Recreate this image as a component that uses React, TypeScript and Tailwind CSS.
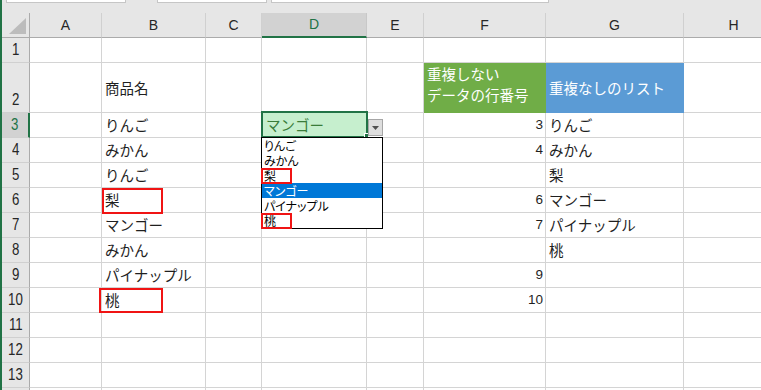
const jp = "font-['Noto_Sans_CJK_JP',sans-serif]";
const lat = "font-['Liberation_Sans',sans-serif]";

type Cell = { t?: string; num?: boolean };

const letters = ["A", "B", "C", "D", "E", "F", "G", "H"];

// row number -> column letter -> cell
const data: Record<number, Record<string, Cell>> = {
  3: { B: { t: "りんご" }, F: { t: "3", num: true }, G: { t: "りんご" } },
  4: { B: { t: "みかん" }, F: { t: "4", num: true }, G: { t: "みかん" } },
  5: { B: { t: "りんご" }, G: { t: "梨" } },
  6: { B: { t: "梨" }, F: { t: "6", num: true }, G: { t: "マンゴー" } },
  7: { B: { t: "マンゴー" }, F: { t: "7", num: true }, G: { t: "パイナップル" } },
  8: { B: { t: "みかん" }, G: { t: "桃" } },
  9: { B: { t: "パイナップル" }, F: { t: "9", num: true } },
  10: { B: { t: "桃" }, F: { t: "10", num: true } },
};

const listItems = ["りんご", "みかん", "梨", "マンゴー", "パイナップル", "桃"];

const TopStrip = () => (
  <div className="flex h-[13px] bg-[#e6e6e6]">
    <div className="ml-[4px] w-[120px] h-[3px] bg-white border border-t-0 border-[#c6c6c6]" />
    <div className="ml-[31px] w-[110px] h-[3px] bg-white border border-t-0 border-[#c6c6c6]" />
    <div className="ml-[4px] w-[278px] h-[3px] bg-white border border-t-0 border-[#c6c6c6]" />
  </div>
);

const RowHeader = ({ n }: { n: number }) => {
  const sel = n === 3;
  return (
    <div
      className={`flex items-end justify-center pb-[4px] border-b border-[#d0d0d0] ${
        sel ? "bg-[#d2d2d2] border-r-2 border-r-[#217346] text-[#217346]" : "bg-[#e6e6e6] border-r border-r-[#ababab] text-[#262626]"
      }`}
    >
      {/* row 14 is only partly on screen */}
      {n < 14 && <span className={`${lat} inline-block text-[17px] leading-none scale-x-[0.78]`}>{n}</span>}
    </div>
  );
};

const DataCell = ({ row, col }: { row: number; col: string }) => {
  if (row === 2 && col === "B")
    return (
      <div className={`${jp} flex items-center pl-[3px] text-[14.5px] text-[#1f1f1f] border-r border-b border-[#d4d4d4]`}>
        商品名
      </div>
    );
  if (row === 2 && col === "F")
    return (
      <div className={`${jp} flex flex-col justify-center pl-[3px] pb-[7px] text-[14.5px] leading-[21px] text-white bg-[#70ad47] border-r border-b border-[#70ad47]`}>
        <span>重複しない</span>
        <span>データの行番号</span>
      </div>
    );
  if (row === 2 && col === "G")
    return (
      <div className={`${jp} flex items-center pl-[3px] text-[14.5px] text-white bg-[#5b9bd5] border-r border-b border-[#5b9bd5]`}>
        重複なしのリスト
      </div>
    );
  if (row === 3 && col === "D")
    return (
      <div className={`${jp} flex items-center pl-[4px] text-[14.5px] text-[#3a7d3a] bg-[#c6efce] border-r border-b border-[#d4d4d4]`}>
        マンゴー
      </div>
    );
  const c = data[row]?.[col];
  if (c?.num)
    return (
      <div className={`${lat} flex items-center justify-end pr-[2px] text-[13.5px] text-[#1f1f1f] border-r border-b border-[#d4d4d4]`}>
        {c.t}
      </div>
    );
  return (
    <div className={`${jp} flex items-center pl-[3px] text-[14.5px] text-[#1f1f1f] whitespace-nowrap border-r border-b border-[#d4d4d4]`}>
      {c?.t}
    </div>
  );
};

export default function App() {
  const rows = Array.from({ length: 14 }, (_, i) => i + 1);
  return (
    <div className="relative w-[761px] h-[390px] overflow-hidden bg-white border-l-2 border-[#217346]">
      <TopStrip />
      <div className="grid grid-cols-[28px_72px_104px_56px_105px_57px_122px_138px_100px] grid-rows-[25px_25px_50px_repeat(12,25px)]">
        {/* corner */}
        <div className="relative bg-[#e6e6e6] border-r border-b border-[#ababab]">
          <svg className="absolute left-[7px] top-[5px]" width="17" height="16" viewBox="0 0 17 16">
            <polygon points="17,0 17,16 0,16" fill="#bcbcbc" />
          </svg>
        </div>
        {letters.map((l) => (
          <div
            key={l}
            className={`${lat} flex items-center justify-center text-[14px] ${
              l === "D"
                ? "bg-[#d2d2d2] text-[#217346] border-r border-r-[#c8c8c8] border-b-2 border-b-[#217346]"
                : "bg-[#e6e6e6] text-[#262626] border-r border-r-[#d0d0d0] border-b border-b-[#ababab]"
            }`}
          >
            {l}
          </div>
        ))}
        {rows.map((r) => [
          <RowHeader key={`h${r}`} n={r} />,
          ...letters.map((l) => <DataCell key={`${l}${r}`} row={r} col={l} />),
        ])}
      </div>

      {/* active cell D3 */}
      <div className="absolute left-[259px] top-[111px] w-[107px] h-[27px] border-2 border-[#217346]" />
      <div className="absolute left-[362px] top-[133px] w-[5px] h-[5px] bg-[#217346] border border-white" />

      {/* dropdown button */}
      <div className="absolute left-[366px] top-[119px] w-[15px] h-[17px] flex items-center justify-center bg-[#dedede] border border-[#a6a6a6]">
        <svg width="7" height="4" viewBox="0 0 7 4">
          <polygon points="0,0 7,0 3.5,4" fill="#505050" />
        </svg>
      </div>

      {/* dropdown list */}
      <div className={`${jp} absolute left-[259px] top-[137px] w-[122px] h-[92px] bg-white border border-black flex flex-col text-[12px] leading-[15px] [font-feature-settings:'palt']`}>
        {listItems.map((it, i) => (
          <div key={it} className={`h-[15px] pl-[2px] ${i === 3 ? "bg-[#0078d7] text-white" : "text-black"}`}>
            {it}
          </div>
        ))}
      </div>

      {/* red marks */}
      <div className="absolute left-[259px] top-[168px] w-[31px] h-[16px] border-2 border-[#f01414]" />
      <div className="absolute left-[259px] top-[213px] w-[31px] h-[16px] border-2 border-[#f01414]" />
      <div className="absolute left-[100px] top-[188px] w-[61px] h-[26px] border-2 border-[#f01414]" />
      <div className="absolute left-[97px] top-[288px] w-[64px] h-[25px] border-2 border-[#f01414]" />
    </div>
  );
}
